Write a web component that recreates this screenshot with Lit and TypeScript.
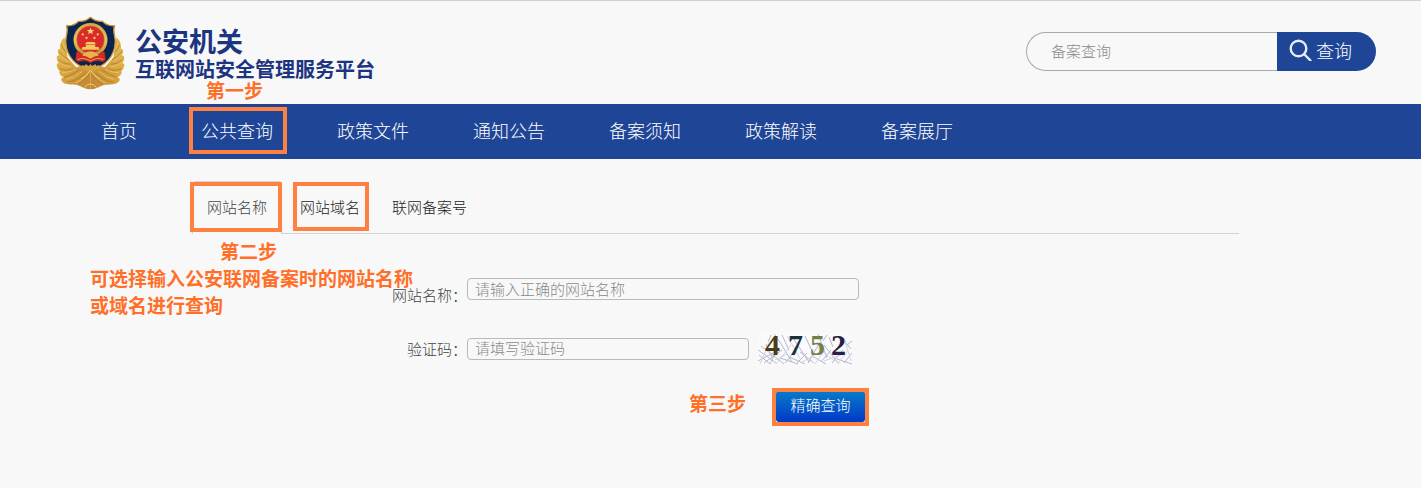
import { LitElement, html, css, svg } from "lit";
import { customElement, state } from "lit/decorators.js";

/* Police badge: gold laurel, navy shield, red national emblem. */
@customElement("police-badge")
class PoliceBadge extends LitElement {
  static styles = css`
    :host { display: block; flex: none; width: 69px; height: 74px; }
    svg { display: block; width: 100%; height: 100%; }
  `;
  render() {
    const half = svg`
      <path fill="url(#leaf)" d="M43 82 C31 93 28 104 30 118 C22 113 21 126 27 137 C17 134 18 148 26 160 C17 158 17 173 29 184 C24 187 31 199 42 202 C27 204 32 219 51 222 C64 225 74 223 84 226 C97 232 107 238 121 238 L121 160 L78 172 L52 142 Z"/>
      <path fill="none" stroke="#a87024" stroke-width="2" d="M34 103 Q38 118 49 128 M27 125 Q38 141 56 149 M25 149 Q38 162 59 163 M28 176 Q46 185 70 178 M42 202 Q66 196 88 179 M52 216 Q78 214 106 190 M84 225 Q102 214 119 192"/>
      <path fill="none" stroke="#e8c264" stroke-width="3" d="M38 98 Q38 110 47 118 M30 133 Q40 148 54 154 M29 158 Q42 171 62 169 M36 188 Q54 188 76 178 M50 208 Q73 205 96 184 M76 219 Q98 211 114 190"/>`;
    return html`
      <svg viewBox="18 18 206 222" aria-hidden="true">
        <defs>
          <linearGradient id="leaf" x1="0" y1="0" x2="1" y2="1">
            <stop offset="0" stop-color="#e5bd55"/>
            <stop offset=".5" stop-color="#d6a33f"/>
            <stop offset="1" stop-color="#c08630"/>
          </linearGradient>
          <linearGradient id="ring" x1="0" y1="0" x2="0" y2="1">
            <stop offset="0" stop-color="#d9a545"/>
            <stop offset=".5" stop-color="#e8c05f"/>
            <stop offset="1" stop-color="#c48a2b"/>
          </linearGradient>
        </defs>
        ${half}
        <g transform="matrix(-1 0 0 1 242 0)">${half}</g>
        <path fill="#0a2450" stroke="#c9963a" stroke-width="4" stroke-linejoin="round"
          d="M121 22 C111 31 99 35 85 34 C77 43 64 48 49 47 C56 66 45 79 47 98 C49 135 72 166 121 181 C170 166 193 135 195 98 C197 79 186 66 193 47 C178 48 165 43 157 34 C143 35 131 31 121 22 Z"/>
        <circle cx="121" cy="90" r="51" fill="url(#ring)"/>
        <circle cx="121" cy="89" r="41" fill="#db2a2c" stroke="#a96c22" stroke-width="2"/>
        <path fill="#f7d873" d="M121 53 l3 7 h8 l-6 5 2 8 -7 -5 -7 5 2 -8 -6 -5 h8 Z"/>
        <g fill="#f3c95c">
          <circle cx="98" cy="73" r="3.5"/><circle cx="143" cy="73" r="3.5"/>
          <circle cx="109" cy="84" r="3.5"/><circle cx="133" cy="84" r="3.5"/>
          <path d="M109 96 h24 l4 7 h-32 Z M107 104 h28 v7 h10 l3 8 H94 l3 -8 h10 Z"/>
        </g>
        <path fill="#d32b29" stroke="#9e2320" stroke-width="1.5" d="M79 126 Q88 121 94 132 Q104 142 121 137 Q138 142 148 132 Q154 121 163 126 L166 150 Q158 158 148 153 Q134 150 121 159 Q108 150 94 153 Q84 158 76 150 Z"/>
        <path fill="#e7b54d" d="M104 128 Q121 119 138 128 L146 137 Q134 136 121 146 Q108 136 96 137 Z"/>
        <path fill="none" stroke="#e9b950" stroke-width="2.5" d="M82 149 Q99 140 121 153 Q143 140 160 149"/>
        <path fill="#d6a33d" d="M88 171 l10 -6 6 3 2 -6 10 6 5 -6 5 6 10 -6 2 6 6 -3 10 6 -33 18 Z"/>
        <path fill="none" stroke="#efce73" stroke-width="3" d="M103 232 Q121 212 139 232 M92 207 Q109 199 121 181 Q133 199 150 207"/>
      </svg>`;
  }
}

/* Verification code picture: four serif digits over scribbled noise. */
@customElement("captcha-code")
class CaptchaCode extends LitElement {
  static styles = css`
    :host { display: block; flex: none; width: 94px; height: 31px; }
    svg { display: block; width: 100%; height: 100%; overflow: visible; }
    .digit { font: bold 30px "Liberation Serif", serif; }
  `;
  render() {
    const digits = [
      { c: "4", x: 7, fill: "#4c3d17" },
      { c: "7", x: 30, fill: "#19313c" },
      { c: "5", x: 52, fill: "#74804a" },
      { c: "2", x: 73, fill: "#252044" },
    ];
    return html`
      <svg viewBox="0 0 94 31" role="img" aria-label="验证码 4752">
        <rect width="94" height="31" fill="#fafafc"/>
        <path fill="none" stroke="#b4b8cb" stroke-width="1" d="M0 17 L18 30 M1 22 L12 31 M3 13 L26 31 M8 11 L14 24 M0 28 L15 20 M6 30 L24 17 M12 31 L20 14 M20 6 L34 29 M24 2 L31 17 M22 25 L40 31 M27 30 L40 14 M31 24 L47 31 M35 5 L51 29 M38 31 L49 20 M42 19 L56 30 M47 3 L55 20 M50 30 L62 9 M54 23 L68 31 M60 1 L69 25 M63 29 L73 17 M66 12 L80 30 M71 4 L75 14 M74 30 L85 17 M79 26 L94 31 M82 3 L93 16 M86 30 L94 20 M13 2 L10 9 M16 1 L20 5 M69 2 L65 8 M89 12 L94 8"/>
        <path fill="none" stroke="#d0d2e3" stroke-width="1" d="M2 31 L9 15 M17 27 L29 21 M18 31 L33 12 M29 3 L43 27 M44 29 L60 20 M57 31 L66 18 M60 15 L77 28 M66 28 L83 22 M80 31 L90 17 M86 5 L93 28"/>
        ${digits.map((d) => svg`<text class="digit" x=${d.x} y="22" fill=${d.fill}>${d.c}</text>`)}
      </svg>`;
  }
}

@customElement("app-root")
class AppRoot extends LitElement {
  static styles = css`
    :host {
      display: block;
      min-height: 100vh;
      box-sizing: border-box;
      background: #f8f8f8;
      border-top: 1px solid #d2d2d2;
      color: #333;
      font: 300 15px/22px "Noto Sans CJK SC", sans-serif;
    }
    *, *::before, *::after { box-sizing: border-box; }
    a { color: inherit; text-decoration: none; }
    input, button { font: inherit; margin: 0; }
    input::placeholder { color: #8a8a8a; opacity: 1; }

    .header {
      position: relative;
      display: flex;
      align-items: flex-start;
      justify-content: space-between;
      height: 103px;
      padding: 15px 45px 0 56px;
    }
    .brand { display: flex; gap: 10px; }
    .brand-text { padding-top: 8px; color: #1c3580; font-weight: 700; }
    .title { margin: 0; font-size: 27px; line-height: 34px; }
    .subtitle { margin: 0; font-size: 20px; line-height: 22px; }

    .search { display: flex; width: 350px; height: 39px; margin-top: 16px; }
    .search-input {
      flex: 1;
      min-width: 0;
      padding: 0 24px 2px;
      border: 1px solid #a9a9a9;
      border-right: 0;
      border-radius: 20px 0 0 20px;
      background: transparent;
      outline: 0;
    }
    .search-button {
      display: flex;
      align-items: center;
      gap: 4px;
      width: 99px;
      padding: 0 0 4px 12px;
      border: 0;
      border-radius: 0 20px 20px 0;
      background: #1f4596;
      color: #fff;
      font-size: 18px;
    }
    .search-icon { width: 23px; height: 23px; }

    .nav {
      display: flex;
      gap: 64px;
      height: 55px;
      padding-left: 101px;
      background: #1f4596;
      color: #fff;
      font-size: 18px;
      line-height: 52px;
      white-space: nowrap;
    }
    .nav-link { position: relative; }

    .mark {
      position: absolute;
      border: 4px solid #ff8142;
      pointer-events: none;
    }
    .mark-nav { inset: 3px -14px 5px -12px; }
    .mark-tab { inset: 0 -1px 2px -3px; }
    .mark-domain { inset: 1px -9px 2px -7px; }
    .mark-submit { inset: -3px -4px -4px -4px; }
    .step {
      position: absolute;
      color: #ff6f28;
      font-size: 19px;
      font-weight: 700;
      line-height: 22px;
      white-space: nowrap;
      pointer-events: none;
    }
    .step-one { left: 206px; bottom: 3px; }
    .step-two { left: 220px; top: 81px; }
    .step-hint { left: 90px; top: 105px; line-height: 27px; }
    .step-three { right: 100%; top: 1px; margin-right: 30px; }

    .main { position: relative; padding: 22px 182px 0 192px; }
    .tabs { display: flex; height: 53px; line-height: 51px; }
    .tab { position: relative; }
    .tab-active {
      width: 90px;
      padding-left: 14px;
      border: 1px solid #d3d3d3;
      border-bottom: 0;
      border-radius: 4px 4px 0 0;
      color: #444;
      line-height: 49px;
    }
    .rest {
      display: flex;
      flex: 1;
      gap: 32px;
      padding-left: 18px;
      border-bottom: 1px solid #d3d3d3;
      color: #222;
    }

    .form {
      display: grid;
      grid-template-columns: 275px minmax(0, 392px);
      grid-template-rows: 28px 31px 31px;
      row-gap: 27px;
      padding-top: 44px;
    }
    .label { align-self: end; text-align: right; color: #444; }
    .label-code { align-self: center; }
    .field {
      width: 100%;
      height: 22px;
      padding: 0 7px 2px;
      border: 1px solid #b3bac0;
      border-radius: 4px;
      background: transparent;
      line-height: 18px;
      outline: 0;
    }
    .code-row { display: flex; align-items: center; gap: 9px; }
    .code-field { width: 282px; }
    .actions { grid-column: 2; padding-left: 309px; }
    .submit-wrap { position: relative; width: 89px; height: 31px; }
    .submit {
      width: 100%;
      height: 100%;
      padding: 0 0 4px;
      border: 0;
      border-radius: 3px;
      background: linear-gradient(#087cc9, #0039c6);
      color: #fff;
      white-space: nowrap;
    }
  `;

  @state() private current = "公共查询";

  private items = ["首页", "公共查询", "政策文件", "通知公告", "备案须知", "政策解读", "备案展厅"];

  render() {
    return html`
      <header class="header">
        <div class="brand">
          <police-badge></police-badge>
          <div class="brand-text">
            <h1 class="title">公安机关</h1>
            <p class="subtitle">互联网站安全管理服务平台</p>
          </div>
        </div>
        <form class="search" role="search" @submit=${this.hold}>
          <input class="search-input" type="text" aria-label="备案查询" placeholder="备案查询" />
          <button class="search-button" type="submit">
            <svg class="search-icon" viewBox="0 0 23 23" fill="none" stroke="#e9edf8" stroke-width="2.4" aria-hidden="true">
              <circle cx="9.5" cy="10.5" r="7.8" />
              <path d="M15 16 L22 23" />
            </svg>
            查询
          </button>
        </form>
        <span class="step step-one">第一步</span>
      </header>

      <nav class="nav">
        ${this.items.map(
          (name) => html`<a class="nav-link" href="#">${name}${name === this.current ? html`<span class="mark mark-nav"></span>` : ""}</a>`
        )}
      </nav>

      <main class="main">
        <div class="tabs">
          <a class="tab tab-active" href="#">网站名称<span class="mark mark-tab"></span></a>
          <div class="rest">
            <a class="tab" href="#">网站域名<span class="mark mark-domain"></span></a>
            <a class="tab" href="#">联网备案号</a>
          </div>
        </div>

        <form class="form" @submit=${this.hold}>
          <label class="label" for="site">网站名称：</label>
          <input class="field" id="site" type="text" placeholder="请输入正确的网站名称" />
          <label class="label label-code" for="code">验证码：</label>
          <div class="code-row">
            <input class="field code-field" id="code" type="text" placeholder="请填写验证码" />
            <captcha-code></captcha-code>
          </div>
          <div class="actions">
            <div class="submit-wrap">
              <button class="submit" type="submit">精确查询</button>
              <span class="mark mark-submit"></span>
              <span class="step step-three">第三步</span>
            </div>
          </div>
        </form>

        <span class="step step-two">第二步</span>
        <span class="step step-hint">可选择输入公安联网备案时的网站名称<br />或域名进行查询</span>
      </main>
    `;
  }

  private hold(e: Event) {
    e.preventDefault();
  }
}
